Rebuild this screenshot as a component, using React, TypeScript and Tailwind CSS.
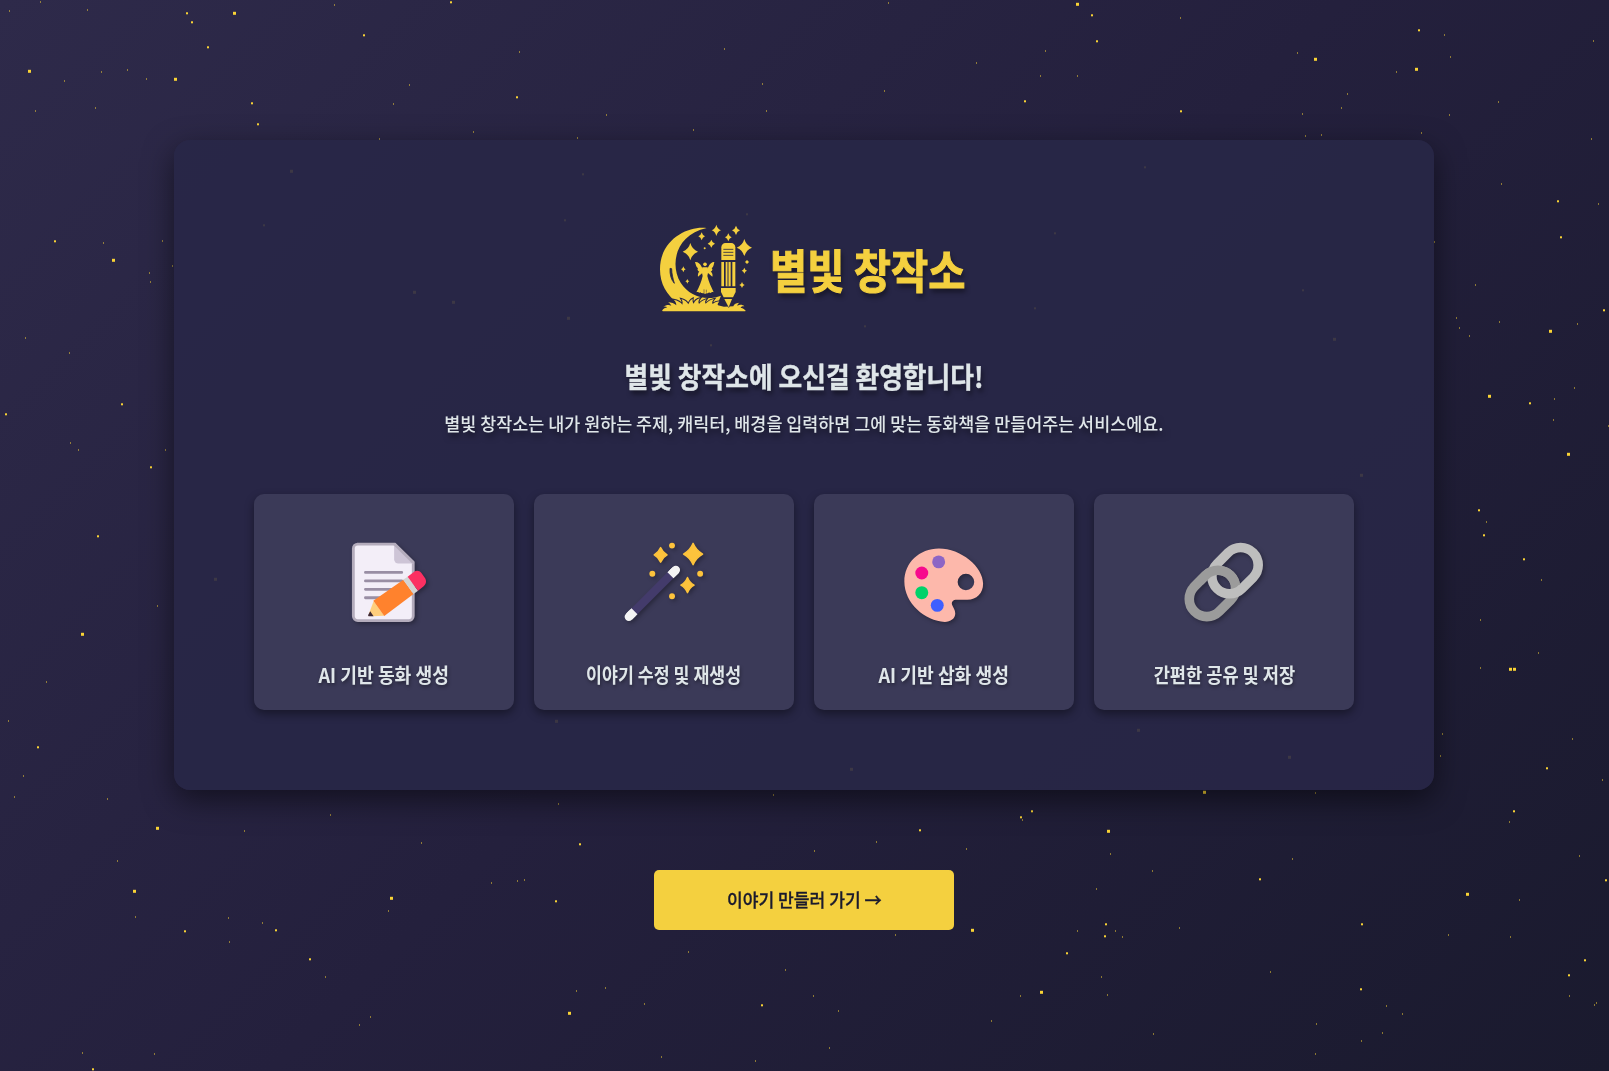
import React from 'react';

type Point = [number, number];

const SMALL_STARS: Point[] = [
  [9, 11], [40, 2], [87, 10], [334, 5], [101, 72], [127, 70], [64, 81], [146, 79], [35, 111], [95, 108],
  [409, 85], [393, 104], [473, 132], [379, 139], [577, 138], [519, 52], [724, 49], [762, 84], [766, 111], [606, 115], [693, 130],
  [888, 3], [1180, 18], [1045, 51], [976, 63], [1040, 76], [1077, 76], [884, 91], [1297, 53], [1396, 72], [1347, 94],
  [1341, 108], [1302, 114], [1305, 136], [1321, 135], [1421, 133], [1449, 115], [1450, 57], [1444, 35], [1498, 102], [1593, 41], [1591, 139],
  [14, 797], [107, 799], [244, 831], [330, 815], [117, 861], [135, 917], [228, 918], [262, 923], [229, 942], [421, 843],
  [558, 804], [491, 883], [517, 881], [524, 880], [388, 911], [325, 977], [370, 1017], [359, 1025], [82, 1053], [154, 1054],
  [576, 991], [605, 988], [644, 1004], [661, 1057], [755, 1061], [688, 952], [785, 970], [773, 795],
  [814, 851], [876, 842], [966, 849], [1022, 820], [1110, 854], [1152, 871], [1096, 889], [1077, 931], [1115, 931], [1122, 937],
  [1179, 928], [1292, 859], [1315, 793], [895, 935], [1270, 972], [1101, 977], [1107, 995], [1020, 996], [991, 1021], [813, 996],
  [838, 1011], [829, 1048], [1153, 1034], [1316, 1024], [1315, 1054], [1361, 1041], [1382, 1033], [1402, 1014], [1386, 1006],
  [1448, 935], [1510, 937], [1519, 900], [1509, 822], [1579, 856], [1569, 996], [1594, 1005], [1596, 1003],
  [103, 243], [162, 241], [172, 266], [149, 273], [150, 282], [25, 338], [69, 353], [70, 443], [78, 450], [165, 450],
  [157, 606], [46, 682], [8, 721], [23, 776],
  [1501, 184], [1598, 204], [1434, 242], [1475, 285], [1456, 318], [1459, 328], [1499, 322], [1469, 336], [1577, 324],
  [1574, 388], [1554, 399], [1553, 420], [1608, 426], [1486, 522], [1541, 580], [1480, 620], [1538, 653], [1442, 734],
  [1440, 756], [1480, 668], [1572, 739], [1602, 780],
];

const MEDIUM_STARS: Point[] = [
  [187, 13], [192, 22], [208, 47], [364, 35], [451, 2], [252, 103], [258, 124], [517, 97],
  [1092, 15], [1097, 41], [1025, 101], [1181, 111], [1419, 30],
  [185, 931], [276, 930], [310, 959], [556, 901], [580, 844], [762, 1005], [93, 1069],
  [1032, 811], [1021, 817], [920, 830], [1260, 879], [1106, 924], [1105, 936], [1067, 953], [1362, 924], [1361, 989],
  [1514, 811], [1606, 880], [1585, 960], [1569, 975],
  [55, 241], [122, 404], [6, 414], [151, 467], [98, 536], [38, 747],
  [1558, 201], [1561, 237], [1604, 310], [1530, 403], [1479, 510], [1484, 535], [1524, 559], [1547, 768],
  [264, 225], [583, 174], [565, 220], [1055, 233], [1145, 167], [711, 345], [1303, 290], [747, 214], [865, 326], [1035, 308],
];

const LARGE_STARS: Point[] = [
  [30, 71.5], [235, 13.5], [176, 79.5], [1078, 4.5], [1316, 59.5], [1417, 69.5],
  [158, 828.5], [135, 891.5], [392, 898.5], [570, 1013.5],
  [1205, 792.5], [1109, 831.5], [973, 930.5], [1042, 992.5], [1468, 894.5],
  [114, 260.5], [83, 634.5],
  [1551, 331.5], [1490, 396.5], [1569, 454.5], [1511, 669.5], [1515, 669.5],
  [292, 171.5], [415, 292.5], [454, 302.5], [569, 318.5], [1362, 475.5], [1335, 339.5], [1139, 730.5], [1290, 757.5],
  [852, 769.5], [557, 721.5], [216, 579.5],
];

function Starfield() {
  return (
    <svg className="pointer-events-none absolute inset-0 h-full w-full" viewBox="0 0 1609 1071" fill="#f9d335" aria-hidden="true">
      {SMALL_STARS.map(([x, y]) => (
        <rect key={`s${x}-${y}`} x={x} y={y - 0.5} width={1} height={1} />
      ))}
      {MEDIUM_STARS.map(([x, y]) => (
        <rect key={`m${x}-${y}`} x={x - 1} y={y - 0.7} width={2} height={2} />
      ))}
      {LARGE_STARS.map(([x, y]) => (
        <rect key={`l${x}-${y}`} x={x - 2} y={y - 1.7} width={3} height={3} />
      ))}
    </svg>
  );
}

/* Four-pointed star centred on (x, y) with horizontal and vertical radii. */
function sparkle(x: number, y: number, rx: number, ry: number, pinch = 0.24) {
  const a = rx * pinch;
  const b = ry * pinch;
  return `M${x} ${y - ry}Q${x + a} ${y - b} ${x + rx} ${y}Q${x + a} ${y + b} ${x} ${y + ry}Q${x - a} ${y + b} ${x - rx} ${y}Q${x - a} ${y - b} ${x} ${y - ry}Z`;
}

function Logo() {
  return (
    <svg className="h-[120px] w-[120px] shrink-0" viewBox="9 -6 360 360" fill="#f4d03f" aria-hidden="true">
      <path d="M200 54C150 46 60 84 60 178C60 222 80 254 112 280L235 276L243 257C196 275 148 258 122 218C88 162 108 74 200 54Z" />
      <path d="M90 175C89 193 93 209 103 220C99 206 95 191 95 176Z" fill="#282645" stroke="#282645" strokeWidth="2.5" />
      <path
        d="M66 302C70 295 76 294 82 292C78 289 74 289 70 290C78 285 87 284 94 287C91 282 88 279 84 277C94 277 103 280 109 286C109 278 105 273 101 269C113 271 123 277 127 284C130 276 126 271 124 267C135 270 142 276 145 283C148 274 152 269 158 266C157 272 158 277 161 281C164 273 171 267 180 265C175 271 174 277 177 282C183 275 189 270 199 268C195 273 194 277 197 281C203 275 211 269 222 267C217 273 215 278 218 282C224 277 230 274 238 275C233 279 232 283 234 286L252 290L280 289C281 284 286 279 298 278C294 281 292 284 292 287C300 283 308 284 313 289C307 288 303 290 302 293C310 295 314 298 316 302Z"
        stroke="#282645" strokeWidth="6" paintOrder="stroke"
      />
      <path d="M68 302H316" stroke="#f4d03f" strokeWidth="4" />
      <path d="M190 181L184 169C180 160 173 155 165 156C168 166 169 171 174 175C171 177 173 183 178 185C174 187 173 195 174 200L187 189ZM200 181L206 169C210 160 217 155 223 156C221 166 220 171 215 175C219 177 217 183 212 185C217 187 219 195 217 200L204 189Z" />
      <circle cx="195" cy="163" r="5.5" />
      <path d="M187 172H203L205 184L202 198C206 216 214 231 221 247C214 244 213 252 207 247C203 253 200 247 195 252C190 247 185 252 182 247C177 251 175 244 169 247C178 230 184 215 188 198L185 184Z" />
      <path d="M192 238V250M199 239V248" stroke="#282645" strokeWidth="1.5" />
      <path d="M244 150V112C244 104 250 99 256 99H274C280 99 286 104 286 112V150Z" />
      <path d="M250 118H280M250 127H280M250 136H280" stroke="#282645" strokeWidth="2.5" />
      <path d="M244 156H252V229H244ZM257 156H272V229H257ZM277 156H286V229H277Z" />
      <path d="M264 156V229" stroke="#282645" strokeWidth="3" />
      <path d="M243 234H287V246L279 262H251L243 246Z" />
      <path d="M253 267H276L266 292Z" stroke="#282645" strokeWidth="3" paintOrder="stroke" />
      <path d={sparkle(151, 125, 23, 26)} />
      <path d={sparkle(313, 113, 23, 26)} />
      <path d={sparkle(229, 61, 14, 17)} />
      <path d={sparkle(288, 61, 12, 14)} />
      <path d={sparkle(185, 79, 10, 12)} />
      <path d={sparkle(265, 82, 10, 12)} />
      <path d={sparkle(214, 101, 11, 12)} />
      <path d={sparkle(130, 178, 7, 9)} />
      <path d={sparkle(142, 214, 6, 7)} />
      <path d={sparkle(313, 182, 8, 9)} />
      <path d={sparkle(306, 225, 8, 9)} />
      <path d={sparkle(321, 156, 6, 6, 0.5)} />
      <circle cx="194" cy="115" r="3" />
    </svg>
  );
}

const iconClass = 'h-[90px] w-[90px] overflow-visible drop-shadow-[2px_2px_2px_rgba(0,0,0,0.3)]';

function MemoIcon() {
  return (
    <svg className={iconClass} viewBox="0 0 32 32" aria-hidden="true">
      <path d="M6.4 2.5H19.8L26.4 9V28.1A1.6 1.6 0 0 1 24.8 29.7H6.7A1.6 1.6 0 0 1 5.1 28.1V4.1A1.6 1.6 0 0 1 6.7 2.5Z" fill="#f3eef8" stroke="#b4acbc" />
      <path d="M19.6 2.7L26.5 9.4H21.1A1.5 1.5 0 0 1 19.6 7.9Z" fill="#cdc4d6" />
      <path d="M19.7 2.5L26.4 9.1" stroke="#b4acbc" />
      <path d="M9.4 12.6H22.3M9.4 15.6H22.3M9.4 18.6H20M9.4 21.6H16" stroke="#998ea4" strokeLinecap="round" />
      <path d="M12.3 22.8L16.1 28L11.5 28.2L10.8 26.8Z" fill="#ffce7c" />
      <path d="M11.1 26.4L12.3 28.2H10.8C10.4 28.2 10.3 27.9 10.4 27.6Z" fill="#402a32" />
      <path d="M22.9 15.2L26.5 20.3L16.1 28.1L12.2 22.7Z" fill="#ff822d" />
      <path d="M24.4 14.1L28.1 19.1L26.5 20.3L22.8 15.2Z" fill="#d3d3d3" />
      <path d="M24.4 14.1L26.6 12.4C27.6 11.7 28.6 11.9 29.3 12.8L30.5 14.5C31.2 15.5 31.1 16.7 30.1 17.5L28.1 19.1Z" fill="#fc3062" />
    </svg>
  );
}

function WandIcon() {
  return (
    <svg className={iconClass} viewBox="0 0 32 32" aria-hidden="true">
      <path d="M3.5 28.4L4.95 26.95M18.7 13.2L20.2 11.7" stroke="#f4f4f4" strokeWidth="3" strokeLinecap="round" />
      <path d="M4.75 27.15L18.9 13" stroke="#433b6b" strokeWidth="3" />
      <path d="M3.6 28.3L5.5 26.4M18.3 13.6L20.1 11.8" stroke="#f4f4f4" strokeWidth="3" />
      <g fill="#fdc33c" stroke="#fdc33c" strokeWidth="0.5" strokeLinejoin="round">
        <path d={sparkle(26.35, 6.05, 3.4, 3.8, 0.32)} />
        <path d={sparkle(14.8, 6.35, 2.3, 2.6, 0.32)} />
        <path d={sparkle(24.35, 17.1, 2.35, 2.7, 0.32)} />
      </g>
      <g fill="#fdc33c">
        <circle cx="18.85" cy="3.05" r="1.05" />
        <circle cx="11.85" cy="13.05" r="1.05" />
        <circle cx="28.85" cy="13.05" r="1.05" />
        <circle cx="18.85" cy="21.05" r="1.05" />
      </g>
    </svg>
  );
}

function PaletteIcon() {
  return (
    <svg className={iconClass} viewBox="0 0 32 32" aria-hidden="true">
      <path
        fillRule="evenodd"
        d="M14.2 4.1C22 4.1 29.9 10.6 29.9 16.6C29.9 20 27.6 22.3 24.3 22.3H20.6C19.2 22.3 18.5 23 18.9 24.2C19.3 25.2 20 26 20 27.2C20 29 18.3 30.2 16.3 30.2C9.3 29.8 1.9 23.6 1.9 15.8C1.9 9.2 7.2 4.1 14.2 4.1ZM26.75 16A2.95 2.95 0 1 0 20.85 16A2.95 2.95 0 1 0 26.75 16Z"
        fill="#fdb8ab"
      />
      <circle cx="14.1" cy="8.85" r="2.3" fill="#8d65c5" />
      <circle cx="8.1" cy="12.8" r="2.3" fill="#f70a8d" />
      <circle cx="8.1" cy="19.8" r="2.3" fill="#00d26a" />
      <circle cx="13.6" cy="24.3" r="2.3" fill="#3f5fff" />
    </svg>
  );
}

function LinkIcon() {
  return (
    <svg className={iconClass} viewBox="0 0 32 32" fill="none" strokeWidth="3.4" aria-hidden="true">
      <clipPath id="link-front">
        <rect x="-30" y="-30" width="60" height="33" transform="translate(17.95 13.95)" />
      </clipPath>
      <rect x="-6.25" y="-6.25" width="18.1" height="12.5" rx="6.25" transform="translate(9.9 22.05) rotate(-45)" stroke="#9b9b9b" />
      <rect x="-6.25" y="-6.25" width="18.1" height="12.5" rx="6.25" transform="translate(17.95 13.95) rotate(-45)" stroke="#bebebe" />
      <g clipPath="url(#link-front)">
        <rect x="-6.25" y="-6.25" width="18.1" height="12.5" rx="6.25" transform="translate(9.9 22.05) rotate(-45)" stroke="#9b9b9b" />
      </g>
    </svg>
  );
}

const FEATURES = [
  { label: 'AI 기반 동화 생성', Icon: MemoIcon, fit: 'scale-x-[0.91]' },
  { label: '이야기 수정 및 재생성', Icon: WandIcon, fit: 'scale-x-[0.865]' },
  { label: 'AI 기반 삽화 생성', Icon: PaletteIcon, fit: 'scale-x-[0.91]' },
  { label: '간편한 공유 및 저장', Icon: LinkIcon, fit: 'scale-x-[0.88]' },
];

export default function App() {
  return (
    <div className="relative flex h-[1071px] w-full flex-col items-center overflow-hidden bg-linear-135 from-[#2e2a4a] via-[#24203d] to-[#1a1a2e] pt-[140px] pr-px font-['Noto_Sans_CJK_KR',sans-serif] text-[#dfe6e9]">
      <Starfield />
      <main className="relative flex h-[650px] w-[1260px] flex-col items-center rounded-2xl bg-[#282747]/90 px-20 pt-[68px] shadow-[0_10px_30px_rgba(0,0,0,0.5)]">
        <div className="flex h-[120px] w-[322px] items-center [text-shadow:2px_4px_6px_rgba(0,0,0,0.45)]">
          <Logo />
          <h1 className="ml-[7px] origin-left scale-x-[0.88] text-[46px] leading-[60px] font-bold whitespace-nowrap text-[#f4d03f] [-webkit-text-stroke:1px_#f4d03f]">
            별빛 창작소
          </h1>
        </div>
        <h2 className="mt-7 scale-x-[0.92] text-[28px] leading-10 font-bold whitespace-nowrap [-webkit-text-stroke:0.4px_#dfe6e9] [text-shadow:2px_4px_6px_rgba(0,0,0,0.5)]">
          별빛 창작소에 오신걸 환영합니다!
        </h2>
        <p className="mt-[13px] scale-x-[0.967] text-lg leading-7 font-medium whitespace-nowrap [text-shadow:2px_4px_6px_rgba(0,0,0,0.5)]">
          별빛 창작소는 내가 원하는 주제, 캐릭터, 배경을 입력하면 그에 맞는 동화책을 만들어주는 서비스에요.
        </p>
        <ul className="mt-[57px] grid w-full grid-cols-4 gap-5">
          {FEATURES.map(({ label, Icon, fit }) => (
            <li key={label} className="flex h-[216px] flex-col items-center rounded-[10px] bg-[#3b3a58] pt-[42.6px] shadow-[0_4px_10px_rgba(0,0,0,0.4)]">
              <Icon />
              <h3 className={`${fit} mt-[34.4px] text-xl leading-7 font-bold whitespace-nowrap [text-shadow:1px_2px_4px_rgba(0,0,0,0.4)]`}>
                {label}
              </h3>
            </li>
          ))}
        </ul>
      </main>
      <button className="relative mt-20 flex h-[60px] w-[300px] items-center justify-center rounded-[5px] bg-[#f4d03f] pb-0.5 text-[#1a1a2e]">
        <span className="scale-x-[0.95] text-lg leading-7 font-medium whitespace-nowrap [-webkit-text-stroke:0.3px_#1a1a2e]">
          이야기 만들러 가기 →
        </span>
      </button>
    </div>
  );
}
